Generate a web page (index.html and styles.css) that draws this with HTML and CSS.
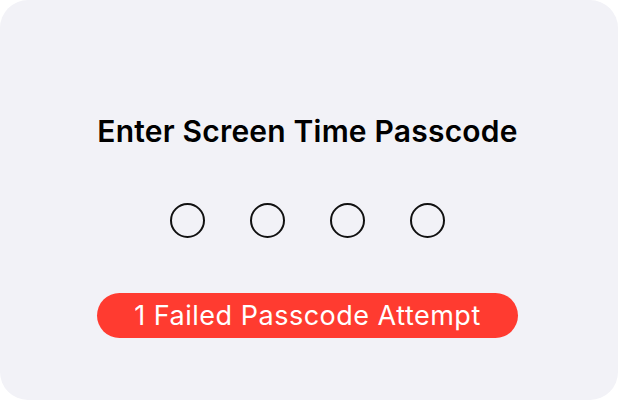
FILE: index.html
```html
<!DOCTYPE html>
<html>
<head>
<meta charset="utf-8">
<link rel="stylesheet" href="styles.css">
</head>
<body>
<div class="card">
  <h1 class="title">Enter Screen Time Passcode</h1>
  <div class="dots">
    <span class="dot"></span>
    <span class="dot"></span>
    <span class="dot"></span>
    <span class="dot"></span>
  </div>
  <div class="failed">1 Failed Passcode Attempt</div>
</div>
</body>
</html>
```
FILE: styles.css
```css
html, body {
  margin: 0;
  padding: 0;
  background: #ffffff;
}
.card {
  width: 618px;
  height: 400px;
  box-sizing: border-box;
  background: #f2f2f7;
  border-radius: 28px;
  display: flex;
  flex-direction: column;
  align-items: center;
  font-family: Inter, "Noto Sans", sans-serif;
  padding-top: 113px;
  padding-right: 3px;
}
.title {
  margin: 0;
  font-size: 30px;
  font-weight: 600;
  color: #000;
  line-height: 36px;
  letter-spacing: 0.2px;
}
.dots {
  display: flex;
  gap: 45px;
  margin-top: 54px;
}
.dot {
  width: 31px;
  height: 31px;
  border: 2px solid #111;
  border-radius: 50%;
}
.failed {
  margin-top: 55px;
  width: 421px;
  height: 45px;
  border-radius: 23px;
  background: #ff3b30;
  color: #fff;
  font-size: 27px;
  line-height: 45px;
  text-align: center;
  letter-spacing: 0.5px;
}
```
